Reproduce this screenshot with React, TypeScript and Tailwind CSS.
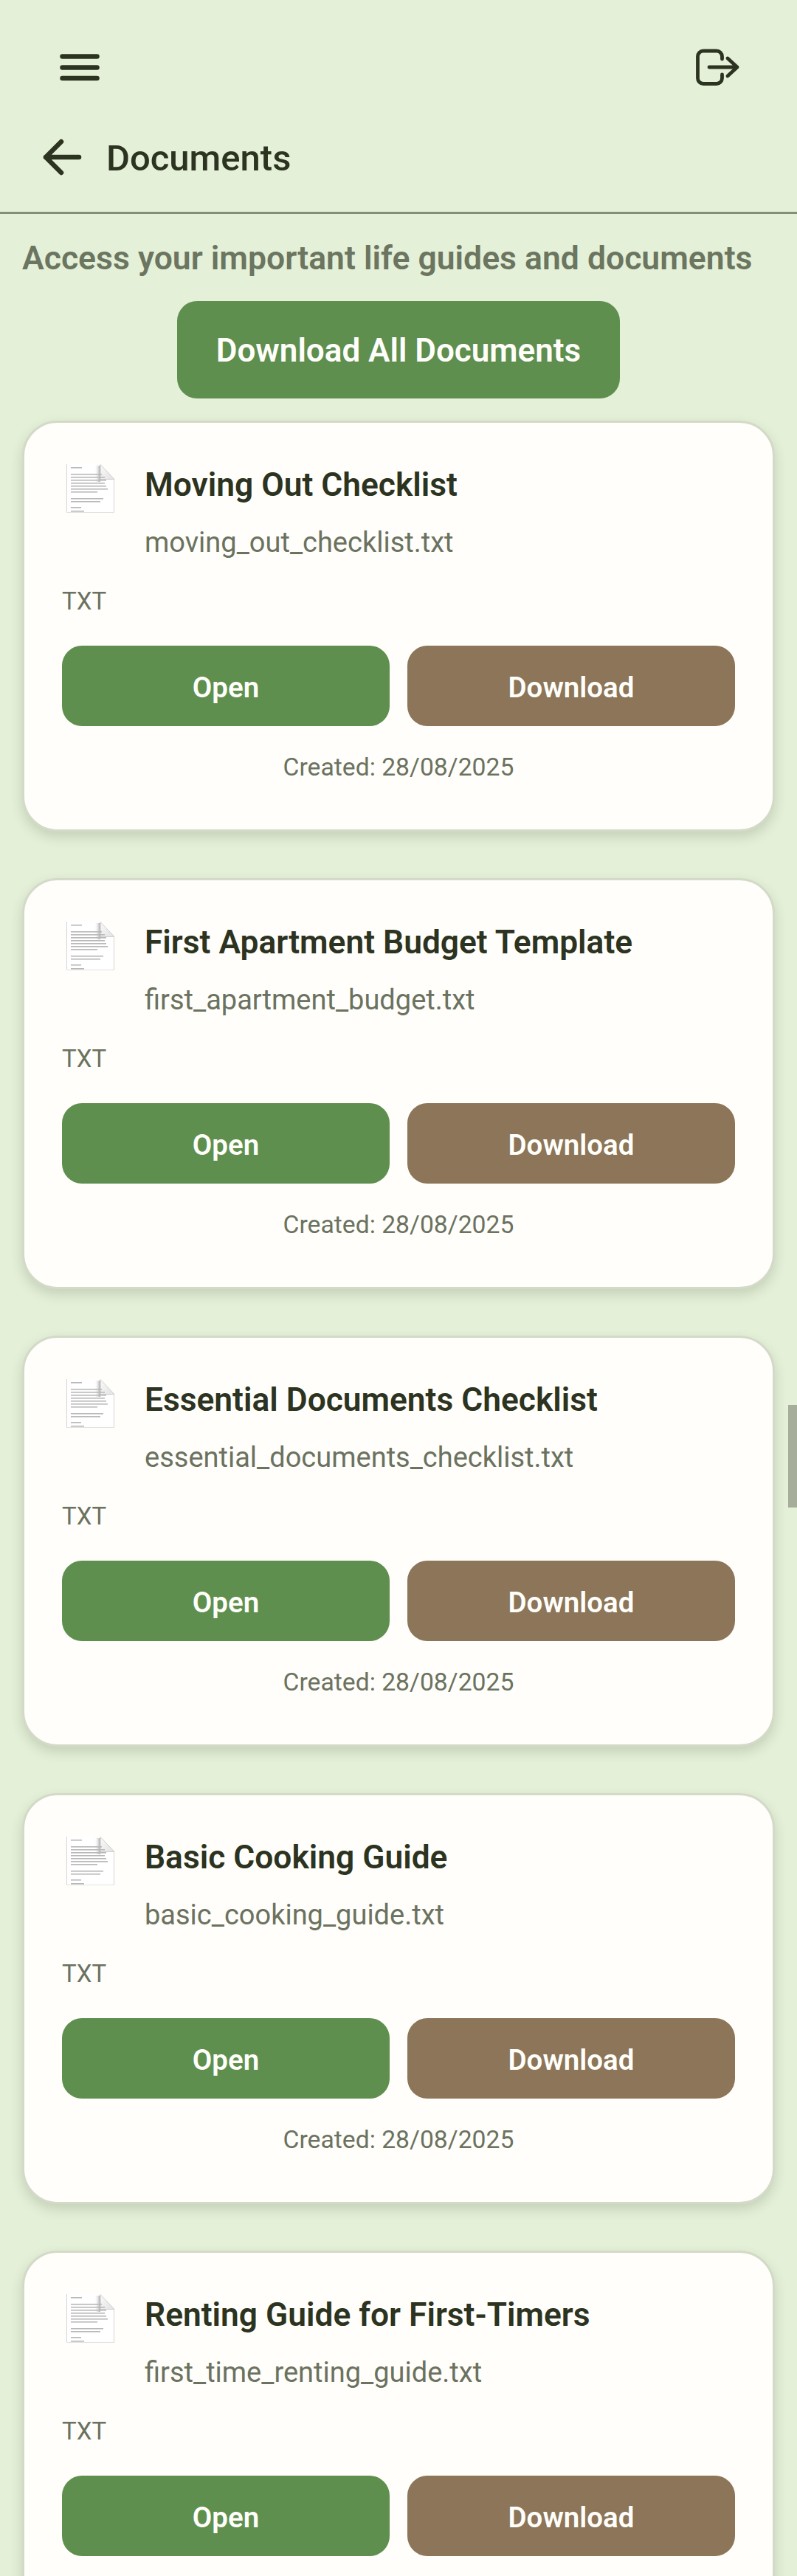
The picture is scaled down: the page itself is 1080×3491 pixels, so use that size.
const docs = [
  { title: "Moving Out Checklist", file: "moving_out_checklist.txt" },
  { title: "First Apartment Budget Template", file: "first_apartment_budget.txt" },
  { title: "Essential Documents Checklist", file: "essential_documents_checklist.txt" },
  { title: "Basic Cooking Guide", file: "basic_cooking_guide.txt" },
  { title: "Renting Guide for First-Timers", file: "first_time_renting_guide.txt" },
];

function DocThumb() {
  const lines = [
    [6, 4, 15], [6, 13, 42], [6, 17, 46], [6, 21, 48], [6, 25, 46], [6, 29, 48], [6, 33, 50], [6, 37, 36],
    [6, 46, 44], [6, 50, 40], [6, 58, 14], [6, 63, 18],
  ];
  return (
    <svg width="65" height="66" viewBox="0 0 65 66" className="shrink-0">
      <defs>
        <linearGradient id="fold" x1="0" y1="0" x2="1" y2="1">
          <stop offset="0" stopColor="#fafafa" />
          <stop offset="1" stopColor="#e2e2e2" />
        </linearGradient>
        <linearGradient id="foldShade" x1="0" y1="0" x2="1" y2="0">
          <stop offset="0" stopColor="#ffffff" stopOpacity="0" />
          <stop offset="1" stopColor="#8e8e8e" stopOpacity="0.8" />
        </linearGradient>
      </defs>
      <path d="M0 0H46L65 20V66H0Z" fill="#ffffff" />
      <path d="M0.5 0V66M64.5 20V66" stroke="#d4d4d4" strokeWidth="1" />
      <path d="M0 65.5H65" stroke="#e2e2e2" strokeWidth="1" />
      <rect x="38" y="2" width="8" height="22" fill="url(#foldShade)" />
      <path d="M46 0.5L65 20.5H46Z" fill="url(#fold)" stroke="#c4c4c4" strokeWidth="0.8" />
      {lines.map(([x, y, w], i) => (
        <rect key={i} x={x} y={y} width={w} height="1.6" fill="#b8b8b8" />
      ))}
    </svg>
  );
}

function DocCard({ title, file }: { title: string; file: string }) {
  return (
    <div className="h-[557px] shrink-0 rounded-[48px] border-[3px] border-[#d3dac7] bg-[#fffefa] px-[51px] pt-[56px] shadow-[0_7px_16px_rgba(70,85,55,0.2)]">
      <div className="flex gap-[41px] pl-[6px]">
        <DocThumb />
        <div className="min-w-0">
          <div className="h-[56px] text-[44.3px] leading-[56px] font-semibold text-[#2c3320]">{title}</div>
          <div className="mt-[25px] h-[50px] text-[38px] leading-[50px] text-[#6b7260]">{file}</div>
        </div>
      </div>
      <div className="mt-[35px] h-[40px] text-[33px] leading-[40px] text-[#6b7260]">TXT</div>
      <div className="mt-[40px] flex gap-[24px]">
        <button className="h-[109px] flex-1 rounded-[27px] bg-[#5e8f4f] pt-[5px] text-[38.5px] font-semibold text-[#fffefa]">Open</button>
        <button className="h-[109px] flex-1 rounded-[27px] bg-[#8c7558] pt-[5px] text-[38.5px] font-semibold text-[#fffefa]">Download</button>
      </div>
      <div className="mt-[36px] h-[40px] text-center text-[33.7px] leading-[40px] text-[#6b7260]">Created: 28/08/2025</div>
    </div>
  );
}

export default function App() {
  return (
    <div className="relative h-[3491px] w-[1080px] overflow-hidden bg-[#e4f0d8] font-['Roboto',sans-serif]">
      <header className="pt-[63px]">
        <div className="flex h-[56px] items-center justify-between pl-[81px] pr-[76px]">
          <svg width="54" height="37" viewBox="0 0 54 37" fill="none" stroke="#2c3320" strokeWidth="6.5" strokeLinecap="round">
            <path d="M3.5 3.5H50.5M3.5 18.5H50.5M3.5 33H50.5" />
          </svg>
          <svg width="64" height="56" viewBox="0 0 64 56" fill="none" stroke="#2c3320" strokeWidth="4.8" strokeLinecap="round" strokeLinejoin="round">
            <path d="M38.5 17V13.5a7.5 7.5 0 0 0-7.5-7.5H13a7.5 7.5 0 0 0-7.5 7.5V43a7.5 7.5 0 0 0 7.5 7.5h18a7.5 7.5 0 0 0 7.5-7.5V38" />
            <path d="M21 28H59M46 16l13 12-13 12" />
          </svg>
        </div>
        <div className="mt-[67px] flex h-[54px] items-center gap-[32px] pl-[56px]">
          <svg width="56" height="54" viewBox="0 0 56 54" fill="none" stroke="#2c3320" strokeWidth="6.5" strokeLinecap="round" strokeLinejoin="round">
            <path d="M27 6L6 27L27 48M6 27H51" />
          </svg>
          <h1 className="relative top-[2px] text-[49px] leading-[54px] font-medium text-[#2c3320]">Documents</h1>
        </div>
        <div className="mt-[47px] h-[3px] bg-[#858f78]" />
      </header>
      <p className="mt-[32px] h-[56px] pl-[30px] text-[44.5px] leading-[56px] font-semibold whitespace-nowrap text-[#6b7560]">
        Access your important life guides and documents
      </p>
      <div className="mt-[30px] flex justify-center">
        <button className="h-[132px] w-[600px] rounded-[27px] bg-[#5e8f4f] pt-[2px] text-[44px] font-semibold text-[#fffefa]">Download All Documents</button>
      </div>
      <div className="mt-[30px] flex flex-col gap-[63px] px-[30px]">
        {docs.map((d) => (
          <DocCard key={d.file} {...d} />
        ))}
      </div>
      <div className="absolute top-[1904px] right-0 h-[139px] w-[12px] bg-[#a6ae9b]" />
    </div>
  );
}
